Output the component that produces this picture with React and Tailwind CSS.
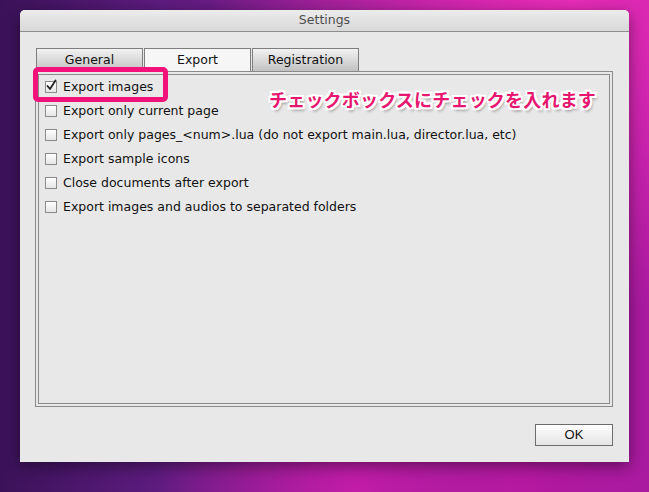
import { Check } from 'lucide-react'

const options = [
  { label: 'Export images', checked: true },
  { label: 'Export only current page', checked: false },
  { label: 'Export only pages_<num>.lua (do not export main.lua, director.lua, etc)', checked: false },
  { label: 'Export sample icons', checked: false },
  { label: 'Close documents after export', checked: false },
  { label: 'Export images and audios to separated folders', checked: false }
]

const tabs = [
  { label: 'General', active: false },
  { label: 'Export', active: true },
  { label: 'Registration', active: false }
]

function Checkbox({ checked }) {
  return (
    <span className="relative w-[12px] h-[12px] border border-[#8b8b8b] bg-gradient-to-b from-white to-[#e6e6e6] shrink-0">
      {checked && (
        <svg className="absolute -left-[1px] -top-[3px]" width="13" height="13" viewBox="0 0 13 13">
          <path d="M2.5 7 L5 10 L10.5 1.5" fill="none" stroke="#222" strokeWidth="1.8" strokeLinecap="round" strokeLinejoin="round" />
        </svg>
      )}
    </span>
  )
}

export default function App() {
  return (
    <div className="relative w-[649px] h-[492px] overflow-hidden bg-[radial-gradient(ellipse_at_88%_0%,#e82cb8_0%,rgba(220,30,170,0)_45%),radial-gradient(ellipse_at_55%_100%,#c21ca8_0%,rgba(190,30,160,0)_40%),linear-gradient(90deg,#3b1259_0%,#5e1c80_25%,#8a1c90_55%,#b3189f_80%,#a81aa0_100%)] font-['DejaVu_Sans',sans-serif] pt-[10px] pl-[20px]">
      <div className="relative w-[609px] h-[452px] bg-[#e8e8e8] rounded-t-[5px] flex flex-col shadow-[0_4px_16px_rgba(0,0,0,0.45)]">
        {/* title bar */}
        <div className="h-[22px] rounded-t-[5px] bg-gradient-to-b from-[#ececec] to-[#d8d8d8] border-b border-[#8e8e8e] flex items-center justify-center">
          <span className="text-[12.5px] text-[#4e4e4e]">Settings</span>
        </div>

        <div className="flex-1 flex flex-col pl-[15px] pr-[16px] pt-[16px]">
          <div className="flex gap-[1px] pl-[1px] h-[23px]">
            {tabs.map(tab => (
              <div
                key={tab.label}
                className={`w-[107px] flex justify-center border border-b-0 border-[#7e7e7e] text-[12.5px] text-[#111] ${tab.active
                  ? 'bg-[#f6f6f6] items-end pb-[1px]'
                  : 'bg-gradient-to-b from-[#f2f2f2] to-[#c2c2c2] items-center'
                  }`}
              >
                {tab.label}
              </div>
            ))}
          </div>

          <div className="h-[336px] border border-[#8a8a8a] p-[2px]">
            <div className="h-full border border-[#8a8a8a] pl-[6px]">
              {options.map(opt => (
                <div key={opt.label} className="h-[24px] flex items-center gap-[6px] text-[12.5px] text-[#111]">
                  <Checkbox checked={opt.checked} />
                  <span>{opt.label}</span>
                </div>
              ))}
            </div>
          </div>

          <div className="flex justify-end pt-[17px]">
            <button className="w-[78px] h-[22px] border border-[#6c6c6c] bg-gradient-to-b from-white to-[#e4e4e4] text-[13px] text-[#111] font-['Liberation_Sans',sans-serif]">
              OK
            </button>
          </div>
        </div>

        {/* annotation overlay */}
        <div className="absolute left-[13px] top-[57px] w-[135px] h-[35px] border-[5px] border-[#f2127a] rounded-[5px]"></div>
        <div className="absolute left-[249px] top-[77px] text-[18px] leading-[24px] tracking-[0.2px] font-bold text-[#e6176f] font-['Noto_Sans_CJK_JP',sans-serif] [text-shadow:2px_0_0_#fff,-2px_0_0_#fff,0_2px_0_#fff,0_-2px_0_#fff,2px_2px_0_#fff,-2px_-2px_0_#fff,2px_-2px_0_#fff,-2px_2px_0_#fff,2px_3px_3px_rgba(0,0,0,0.45)]">
          チェックボックスにチェックを入れます
        </div>
      </div>
    </div>
  )
}
